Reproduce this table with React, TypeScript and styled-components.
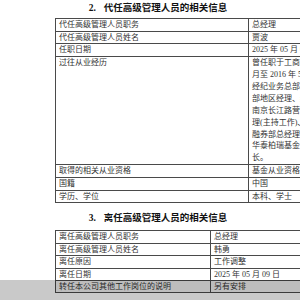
import React from 'react';
import styled, { createGlobalStyle } from 'styled-components';

const GlobalStyle = createGlobalStyle`
    html, body {
        margin: 0;
        padding: 0;
        background: #ffffff;
        overflow: hidden;
    }
`

const Page = styled.div`
    width: 316px;
    padding-top: 2px;
    font-family: "Liberation Serif", "Noto Sans CJK SC", serif;
    color: #333333;
`

const Heading = styled.div<{ $top: number }>`
    margin-top: ${p => p.$top}px;
    height: 12px;
    line-height: 12px;
    font-size: 9.5px;
    font-weight: bold;
    color: #111111;
    display: flex;
    justify-content: center;
`

const HeadingNo = styled.span`
    margin-right: 8px;
`

const Table = styled.table<{ $after: number }>`
    margin-left: 55px;
    margin-top: ${p => p.$after}px;
    width: 261px;
    border-collapse: collapse;
    table-layout: fixed;
    font-size: 8px;
`

const Row = styled.tr<{ $shaded?: boolean }>`
    background: ${p => (p.$shaded ? '#f0f0f0' : 'transparent')};
`

const Cell = styled.td<{ $lh: number }>`
    border: 1px solid #4a4a4a;
    padding: 0 0 0 3px;
    line-height: ${p => p.$lh}px;
    vertical-align: top;
    white-space: nowrap;
    overflow: hidden;
`

const LongText = styled.div`
    line-height: 11.9px;
`

const BottomShade = styled.div`
    position: fixed;
    left: 0;
    right: 0;
    bottom: 0;
    height: 20px;
    background: rgba(0, 0, 0, 0.21);
`

const career = [
    '曾任职于工商银行江苏省分行，2001 年 8',
    '月至 2016 年 5 月任职于华泰证券股份有限公司，历任',
    '经纪业务总部客户服务中心副经理、经纪业务总部南京',
    '部地区经理、经纪业务总部营业部管理总部经理助理、',
    '南京长江路营业部总经理、南京中山北路营业部副总经',
    '理(主持工作)、融资融券部总经理助理、融资',
    '融券部总经理等职务。2016 年加入华泰柏瑞基金，现任',
    '华泰柏瑞基金管理有限公司副总经理、董事会秘书、董事',
    '长。',
]

const acting: [string, string][] = [
    ['代任高级管理人员职务', '总经理'],
    ['代任高级管理人员姓名', '贾波'],
    ['任职日期', '2025 年 05 月 09 日'],
]

const actingTail: [string, string][] = [
    ['取得的相关从业资格', '基金从业资格'],
    ['国籍', '中国'],
    ['学历、学位', '本科、学士'],
]

const leaving: [string, string][] = [
    ['离任高级管理人员职务', '总经理'],
    ['离任高级管理人员姓名', '韩勇'],
    ['离任原因', '工作调整'],
    ['离任日期', '2025 年 05 月 09 日'],
]

const App = () => {
  return (
    <Page>
        <GlobalStyle />

        <Heading $top={0}>
            <HeadingNo>2.</HeadingNo>代任高级管理人员的相关信息
        </Heading>
        <Table $after={4}>
            <colgroup>
                <col style={{ width: 193 }} />
                <col />
            </colgroup>
            <tbody>
                {acting.map(([k, v]) => (
                    <Row key={k}>
                        <Cell $lh={11.7}>{k}</Cell>
                        <Cell $lh={11.7}>{v}</Cell>
                    </Row>
                ))}
                <Row>
                    <Cell $lh={11.7}>过往从业经历</Cell>
                    <Cell $lh={11.7}>
                        {career.map(line => (
                            <LongText key={line}>{line}</LongText>
                        ))}
                    </Cell>
                </Row>
                {actingTail.map(([k, v]) => (
                    <Row key={k}>
                        <Cell $lh={11.7}>{k}</Cell>
                        <Cell $lh={11.7}>{v}</Cell>
                    </Row>
                ))}
            </tbody>
        </Table>

        <Heading $top={9}>
            <HeadingNo>3.</HeadingNo>离任高级管理人员的相关信息
        </Heading>
        <Table $after={6}>
            <colgroup>
                <col style={{ width: 155 }} />
                <col />
            </colgroup>
            <tbody>
                {leaving.map(([k, v]) => (
                    <Row key={k}>
                        <Cell $lh={11.4}>{k}</Cell>
                        <Cell $lh={11.4}>{v}</Cell>
                    </Row>
                ))}
                <Row $shaded>
                    <Cell $lh={11.4}>转任本公司其他工作岗位的说明</Cell>
                    <Cell $lh={11.4}>另有安排</Cell>
                </Row>
            </tbody>
        </Table>

        <BottomShade />
    </Page>
  );
}

export default App;
